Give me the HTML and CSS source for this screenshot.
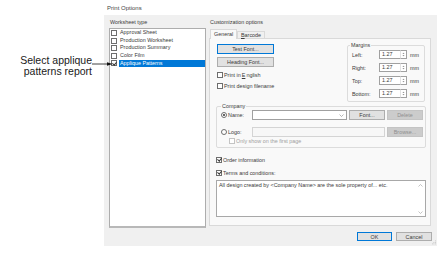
FILE: index.html
```html
<!DOCTYPE html>
<html lang="en">
<head>
    <meta charset="UTF-8">
    <title>Print Options</title>
    <link rel="stylesheet" href="styles.css">
</head>
<body>
    <div class="page">
        <div class="callout">
            <p class="callout-text">Select applique<br>patterns report</p>
            <svg class="callout-arrow" viewBox="0 0 21 6">
                <line x1="0" y1="3" x2="18" y2="3" stroke="#111" stroke-width="0.8"/>
                <path d="M15 1.2 L20.5 3 L15 4.8 Z" fill="#111"/>
            </svg>
        </div>

        <div class="window">
            <div class="window-title">Print Options</div>

            <div class="dialog">
                <!-- Worksheet list -->
                <div class="sheet-col">
                    <div class="col-label">Worksheet type</div>
                    <ul class="sheet-list">
                        <li class="sheet-item"><span class="chk"></span><span class="sheet-name">Approval Sheet</span></li>
                        <li class="sheet-item"><span class="chk"></span><span class="sheet-name">Production Worksheet</span></li>
                        <li class="sheet-item"><span class="chk"></span><span class="sheet-name">Production Summary</span></li>
                        <li class="sheet-item"><span class="chk"></span><span class="sheet-name">Color Film</span></li>
                        <li class="sheet-item selected"><span class="chk on"></span><span class="sheet-name">Applique Patterns</span></li>
                    </ul>
                </div>

                <!-- Customization options -->
                <div class="options-col">
                    <div class="col-label">Customization options</div>
                    <div class="tabs">
                        <span class="tab active">General</span>
                        <span class="tab"><u>B</u>arcode</span>
                    </div>

                    <div class="tab-panel">
                        <div class="top-row">
                            <div class="font-col">
                                <button class="btn wide focus">Test Font...</button>
                                <button class="btn wide">Heading Font...</button>
                                <label class="check-row first"><span class="chk"></span>Print in <u>E</u>nglish</label>
                                <label class="check-row"><span class="chk"></span>Print design filename</label>
                            </div>

                            <fieldset class="group margins">
                                <legend>Margins</legend>
                                <div class="margin-row">
                                    <span class="margin-label">Left:</span>
                                    <span class="spin-field">1.27</span>
                                    <svg class="spinner" viewBox="0 0 7 9"><path d="M2 3.6 L3.5 2 L5 3.6 Z M2 5.4 L3.5 7 L5 5.4 Z" fill="#707070"/></svg>
                                    <span class="unit">mm</span>
                                </div>
                                <div class="margin-row">
                                    <span class="margin-label">Right:</span>
                                    <span class="spin-field">1.27</span>
                                    <svg class="spinner" viewBox="0 0 7 9"><path d="M2 3.6 L3.5 2 L5 3.6 Z M2 5.4 L3.5 7 L5 5.4 Z" fill="#707070"/></svg>
                                    <span class="unit">mm</span>
                                </div>
                                <div class="margin-row">
                                    <span class="margin-label">Top:</span>
                                    <span class="spin-field">1.27</span>
                                    <svg class="spinner" viewBox="0 0 7 9"><path d="M2 3.6 L3.5 2 L5 3.6 Z M2 5.4 L3.5 7 L5 5.4 Z" fill="#707070"/></svg>
                                    <span class="unit">mm</span>
                                </div>
                                <div class="margin-row">
                                    <span class="margin-label">Bottom:</span>
                                    <span class="spin-field">1.27</span>
                                    <svg class="spinner" viewBox="0 0 7 9"><path d="M2 3.6 L3.5 2 L5 3.6 Z M2 5.4 L3.5 7 L5 5.4 Z" fill="#707070"/></svg>
                                    <span class="unit">mm</span>
                                </div>
                            </fieldset>
                        </div>

                        <fieldset class="group company">
                            <legend>Company</legend>
                            <div class="company-row">
                                <span class="radio-label"><span class="radio on"></span>Name:</span>
                                <span class="combo">
                                    <svg class="combo-arrow" viewBox="0 0 5 3"><path d="M0.5 0.5 L2.5 2.5 L4.5 0.5" fill="none" stroke="#999" stroke-width="0.7"/></svg>
                                </span>
                                <button class="btn small">Font...</button>
                                <button class="btn small off">Delete</button>
                            </div>
                            <div class="company-row logo-row">
                                <span class="radio-label"><span class="radio"></span>Logo:</span>
                                <span class="field off"></span>
                                <button class="btn small off">Browse...</button>
                            </div>
                            <label class="check-row only-first off"><span class="chk"></span>Only show on the first page</label>
                        </fieldset>

                        <label class="check-row order"><span class="chk on"></span>Order information</label>
                        <label class="check-row terms"><span class="chk on"></span>Terms and conditions:</label>

                        <div class="terms-box">
                            <p class="terms-text">All design created by &lt;Company Name&gt; are the sole property of... etc.</p>
                            <div class="terms-scroll">
                                <svg viewBox="0 0 5 3"><path d="M0.5 2.5 L2.5 0.5 L4.5 2.5" fill="none" stroke="#aaa" stroke-width="0.7"/></svg>
                                <svg viewBox="0 0 5 3"><path d="M0.5 0.5 L2.5 2.5 L4.5 0.5" fill="none" stroke="#aaa" stroke-width="0.7"/></svg>
                            </div>
                        </div>
                    </div>
                </div>

                <div class="dialog-buttons">
                    <button class="btn action focus">OK</button>
                    <button class="btn action">Cancel</button>
                </div>

                <svg class="grip" viewBox="0 0 4 5">
                    <rect x="3" y="0.5" width="0.8" height="0.8" fill="#bbb"/>
                    <rect x="1.5" y="2" width="0.8" height="0.8" fill="#bbb"/>
                    <rect x="3" y="2" width="0.8" height="0.8" fill="#bbb"/>
                    <rect x="0" y="3.5" width="0.8" height="0.8" fill="#bbb"/>
                    <rect x="1.5" y="3.5" width="0.8" height="0.8" fill="#bbb"/>
                    <rect x="3" y="3.5" width="0.8" height="0.8" fill="#bbb"/>
                </svg>
            </div>
        </div>
    </div>
</body>
</html>
```

FILE: styles.css
```css
* {
    margin: 0;
    padding: 0;
    box-sizing: border-box;
}

body {
    background: #fff;
    font-family: "Liberation Sans", Arial, sans-serif;
    font-size: 5.4px;
    color: #3a3a3a;
}

.page {
    display: flex;
    width: 448px;
    height: 261px;
}

/* Callout on the left */
.callout {
    position: relative;
    width: 104px;
    flex-shrink: 0;
}

.callout-text {
    font-size: 10.5px;
    line-height: 10.5px;
    color: #1a1a1a;
    text-align: right;
    padding: 55px 12px 0 0;
}

.callout-arrow {
    position: absolute;
    left: 92px;
    top: 61px;
    width: 21px;
    height: 6px;
    z-index: 2;
}

/* Dialog window */
.window {
    width: 333px;
}

.window-title {
    height: 15px;
    padding: 1px 0 0 3px;
    font-size: 6px;
    line-height: 14px;
    color: #444;
}

.dialog {
    position: relative;
    height: 231px;
    background: #f0f0f0;
    display: grid;
    grid-template-columns: 97px 222px;
    column-gap: 3px;
    align-content: start;
    padding: 3px 6px 0 5px;
}

.col-label {
    height: 8px;
    line-height: 8px;
    padding-left: 1px;
}

/* Worksheet list */
.sheet-list {
    list-style: none;
    margin-top: 2px;
    height: 200px;
    background: #fff;
    border: 1px solid #adadad;
    border-bottom: 2px solid #b8b8b8;
    padding-top: 0.2px;
}

.sheet-item {
    display: flex;
    align-items: center;
    height: 7.6px;
}

.sheet-item .chk {
    margin-left: 1px;
}

.sheet-name {
    flex: 1;
    margin-left: 2px;
    padding-left: 1px;
    line-height: 7.6px;
    white-space: nowrap;
}

.sheet-item.selected .sheet-name {
    background: #0078d7;
    color: #fff;
}

/* Checkboxes and radios */
.chk {
    position: relative;
    display: inline-block;
    width: 6px;
    height: 6px;
    border: 1px solid #6e6e6e;
    background: #fff;
    flex-shrink: 0;
}

.chk.on::after {
    content: "";
    position: absolute;
    left: 1.3px;
    top: -0.2px;
    width: 1.6px;
    height: 3.2px;
    border: solid #333;
    border-width: 0 0.8px 0.8px 0;
    transform: rotate(40deg);
}

.radio {
    position: relative;
    display: inline-block;
    width: 6px;
    height: 6px;
    border: 1px solid #6e6e6e;
    border-radius: 50%;
    background: #fff;
    flex-shrink: 0;
}

.radio.on::after {
    content: "";
    position: absolute;
    left: 1px;
    top: 1px;
    width: 2px;
    height: 2px;
    border-radius: 50%;
    background: #333;
}

.check-row {
    display: flex;
    align-items: center;
    gap: 1px;
    height: 9px;
    white-space: nowrap;
}

.check-row.off {
    color: #a0a0a0;
}

.check-row.off .chk {
    border-color: #c4c4c4;
}

/* Tabs */
.tabs {
    display: flex;
    align-items: flex-end;
    height: 9px;
    margin-top: 3px;
    padding-left: 1px;
}

.tab {
    height: 7px;
    line-height: 6px;
    padding: 0 3px;
    border: 1px solid #d9d9d9;
    border-bottom: none;
    background: #f0f0f0;
}

.tab.active {
    position: relative;
    height: 10px;
    line-height: 8px;
    width: 27px;
    margin-bottom: -1px;
    background: #f9f9f9;
    z-index: 1;
}

.tab-panel {
    height: 188px;
    background: #f9f9f9;
    border: 1px solid #d9d9d9;
}

/* Buttons */
.btn {
    display: flex;
    align-items: center;
    justify-content: center;
    height: 10px;
    border: 1px solid #adadad;
    background: #e1e1e1;
    font: inherit;
    color: #3a3a3a;
    line-height: 8px;
}

.btn.focus {
    border-color: #0078d7;
}

.btn.off {
    background: #cccccc;
    border-color: #c4c4c4;
    color: #8f8f8f;
}

.btn.wide {
    width: 57px;
}

.btn.wide + .btn.wide {
    margin-top: 3px;
}

.btn.small {
    width: 36px;
    margin-left: 2px;
}

.btn.action {
    width: 35px;
    height: 9px;
}

/* General tab: top row */
.top-row {
    display: flex;
    padding: 5px 5px 0 7px;
}

.font-col {
    flex: 1;
}

.check-row.first {
    margin-top: 3px;
}

.font-col .check-row + .check-row {
    margin-top: 2px;
}

.group {
    border: 1px solid #dcdcdc;
    border-radius: 2px;
}

.group legend {
    height: 5px;
    line-height: 5px;
    padding: 0 1px;
}

.margins {
    width: 78px;
    height: 59px;
    margin-top: -1px;
    padding: 2px 3px 3px 4px;
}

.margins legend {
    margin-left: -2px;
}

.margin-row {
    display: flex;
    align-items: center;
    height: 9px;
}

.margin-row + .margin-row {
    margin-top: 4px;
}

.margin-label {
    width: 27px;
}

.spin-field {
    width: 21px;
    height: 9px;
    line-height: 7px;
    padding-left: 2px;
    background: #fff;
    border: 1px solid #a0a0a0;
    border-right: none;
}

.spinner {
    width: 7px;
    height: 9px;
    background: #fff;
    border: 1px solid #a0a0a0;
    border-left: 1px solid #e2e2e2;
}

.unit {
    margin-left: 3px;
}

/* Company group */
.company {
    height: 44px;
    margin: 2px 4px 0 6px;
    padding: 1px 2px 3px 4px;
}

.company-row {
    display: flex;
    align-items: center;
    height: 10px;
}

.logo-row {
    margin-top: 7px;
}

.radio-label {
    display: flex;
    align-items: center;
    gap: 1px;
    width: 31px;
}

.combo {
    display: flex;
    align-items: center;
    justify-content: flex-end;
    width: 95px;
    height: 10px;
    padding-right: 2px;
    background: #fff;
    border: 1px solid #a0a0a0;
}

.combo-arrow {
    width: 5px;
    height: 3px;
}

.field {
    width: 133px;
    height: 10px;
    background: #fff;
    border: 1px solid #a0a0a0;
}

.field.off {
    background: #f7f7f7;
    border-color: #d4d4d4;
}

.only-first {
    height: 6px;
    margin: 1px 0 0 8px;
}

/* Order / terms */
.check-row.order {
    margin: 7px 0 0 6px;
}

.check-row.terms {
    margin: 4px 0 0 6px;
}

.terms-box {
    display: flex;
    height: 37px;
    margin: 3px 4px 0 6px;
    background: #fff;
    border: 1px solid #a8a8a8;
}

.terms-text {
    flex: 1;
    padding: 1px 2px;
    line-height: 7px;
    white-space: nowrap;
}

.terms-scroll {
    display: flex;
    flex-direction: column;
    justify-content: space-between;
    align-items: center;
    width: 9px;
    padding: 3px 0 2px;
}

.terms-scroll svg {
    width: 5px;
    height: 3px;
}

/* Dialog buttons */
.dialog-buttons {
    grid-column: 1 / -1;
    display: flex;
    justify-content: flex-end;
    gap: 4px;
    margin: 4px -1px 0 0;
}

.dialog-buttons .btn.action + .btn.action {
    width: 36px;
}

.grip {
    position: absolute;
    right: 1px;
    bottom: 1px;
    width: 4px;
    height: 5px;
}
```
